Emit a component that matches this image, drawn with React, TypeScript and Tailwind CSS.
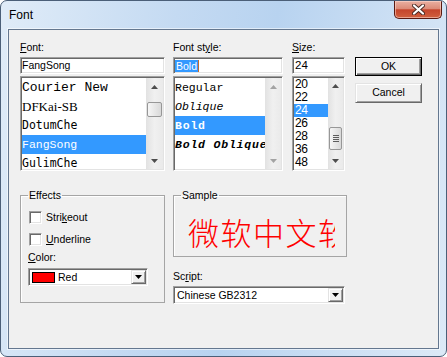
import React from 'react';

const ui = "font-['Liberation_Sans',Arial,sans-serif] text-[10.5px] text-black";
const sunken =
  'border border-t-[#a0a0a0] border-l-[#a0a0a0] border-b-white border-r-white shadow-[inset_1px_1px_0_#696969,inset_-1px_-1px_0_#e3e3e3]';
const raised =
  'border border-t-[#e3e3e3] border-l-[#e3e3e3] border-b-[#696969] border-r-[#696969] shadow-[inset_1px_1px_0_#fff,inset_-1px_-1px_0_#a0a0a0]';

const Arrow = ({ up, disabled }: { up?: boolean; disabled?: boolean }) => (
  <svg width="7" height="4" viewBox="0 0 7 4">
    <polygon points={up ? '0,4 3.5,0 7,4' : '0,0 7,0 3.5,4'} fill={disabled ? '#a3a3a3' : '#4d4d4d'} />
  </svg>
);

interface ScrollProps {
  w: string;
  btn: string;
  spacer?: string;
  thumb?: string;
  grip?: boolean;
  disabled?: boolean;
}

const ScrollBar: React.FC<ScrollProps> = ({ w, btn, spacer, thumb, grip, disabled }) => (
  <div className={`${w} h-full shrink-0 flex flex-col bg-gradient-to-r from-[#e2e2e2] via-[#f0f0f0] to-[#eaeaea]`}>
    <div className={`${btn} flex items-center justify-center shrink-0`}>
      <Arrow up disabled={disabled} />
    </div>
    <div className="flex-1 flex flex-col">
      {thumb && (
        <>
          <div className={spacer} />
          <div
            className={`${thumb} mx-px rounded-[2px] border border-[#979797] bg-gradient-to-r from-[#f6f6f6] to-[#d9d9d9] flex flex-col items-center justify-center gap-px`}
          >
            {grip &&
              [0, 1, 2, 3].map((i) => <div key={i} className="w-[6px] h-px bg-[#5d5d5d]" />)}
          </div>
        </>
      )}
    </div>
    <div className={`${btn} flex items-center justify-center shrink-0`}>
      <Arrow disabled={disabled} />
    </div>
  </div>
);

const fontItems = [
  { name: 'Courier New', cls: "font-['Liberation_Mono',monospace] text-[13px]" },
  { name: 'DFKai-SB', cls: "font-['Liberation_Serif',serif] text-[13px]" },
  { name: 'DotumChe', cls: "font-['DejaVu_Sans_Mono',monospace] text-[11.5px]" },
  { name: 'FangSong', cls: "font-['Liberation_Mono',monospace] text-[11.5px]", sel: true },
  { name: 'GulimChe', cls: "font-['DejaVu_Sans_Mono',monospace] text-[11.5px]" },
];

const styleItems = [
  { name: 'Regular', cls: '' },
  { name: 'Oblique', cls: 'italic' },
  { name: 'Bold', cls: 'font-bold tracking-[0.8px]', sel: true },
  { name: 'Bold Oblique', cls: 'font-bold italic tracking-[0.8px]' },
];

const sizes = ['20', '22', '24', '26', '28', '36', '48'];

const Combo = ({ w, children }: { w: string; children: React.ReactNode }) => (
  <div className={`${w} h-[18px] ${sunken} bg-white p-px flex items-center`}>
    <div className="flex-1 flex items-center overflow-hidden">{children}</div>
    <div className={`w-[15px] h-[14px] ${raised} bg-[#f0f0f0] flex items-center justify-center`}>
      <svg width="7" height="4" viewBox="0 0 7 4">
        <polygon points="0,0 7,0 3.5,4" fill="#000" />
      </svg>
    </div>
  </div>
);

const CheckRow = ({ children }: { children: React.ReactNode }) => (
  <div className="flex items-center h-[13px] pl-[1px]">
    <div className={`w-[13px] h-[13px] ${sunken} bg-white`} />
    <span className="ml-[4px] leading-[13px]">{children}</span>
  </div>
);

export default function App() {
  return (
    <div
      className={`${ui} w-[447px] h-[357px] flex flex-col rounded-[7px] border border-[#4b5f78] overflow-hidden bg-[linear-gradient(100deg,#e0ecf8_0%,#c4daf2_35%,#b8d3f0_55%,#cde0f4_80%,#dce9f7_100%)]`}
    >
      {/* title bar */}
      <div className="flex h-[28px] shrink-0">
        <div className="pl-[8px] pt-[7px] text-[12px] leading-[15px]">Font</div>
        <div className="ml-auto mr-[4px] w-[48px] h-[18px] rounded-b-[5px] border border-t-0 border-[#5a1a12] shadow-[inset_0_0_0_1px_rgba(255,220,210,0.55)] bg-[linear-gradient(180deg,#eab0a2_0%,#dc8b78_45%,#c5452c_52%,#d0603f_100%)] flex items-center justify-center">
          <svg width="13" height="11" viewBox="0 0 13 11">
            <path d="M2 1.5 L11 9.5 M11 1.5 L2 9.5" stroke="#4a2a24" strokeWidth="4" strokeLinecap="round" />
            <path d="M2 1.5 L11 9.5 M11 1.5 L2 9.5" stroke="#fff" strokeWidth="2.2" strokeLinecap="round" />
          </svg>
        </div>
      </div>

      {/* client area */}
      <div className="ml-[7px] w-[431px] h-[320px] shrink-0 border border-[#64778f] shadow-[0_0_0_1px_rgba(255,255,255,0.55)] bg-[#f0f0f0] pt-[11px] pl-[11px]">
        <div className="flex">
          {/* Font */}
          <div className="w-[145px]">
            <div className="h-[16px] leading-[13px]">
              <u>F</u>ont:
            </div>
            <div className={`h-[17px] ${sunken} bg-white p-px leading-[13px]`}>FangSong</div>
            <div className={`mt-[2px] h-[95px] ${sunken} bg-white p-px flex overflow-hidden`}>
              <div className="flex-1 overflow-hidden">
                {fontItems.map((f) => (
                  <div
                    key={f.name}
                    className={`${f.cls} h-[19px] leading-[19px] whitespace-nowrap ${f.sel ? 'bg-[#3399ff] text-white' : ''}`}
                  >
                    {f.name}
                  </div>
                ))}
              </div>
              <ScrollBar w="w-[17px]" btn="h-[17px]" spacer="h-[7px]" thumb="h-[15px]" />
            </div>
          </div>

          {/* Font style */}
          <div className="w-[110px] ml-[8px]">
            <div className="h-[16px] leading-[13px]">
              Font st<u>y</u>le:
            </div>
            <div className={`h-[17px] ${sunken} bg-white p-px flex items-center`}>
              <span className="px-px bg-[#3399ff] text-white leading-[12px]">Bold</span>
              <span className="w-px h-[12px] bg-[#c46a2e]" />
            </div>
            <div className={`mt-[2px] h-[95px] ${sunken} bg-white p-px flex overflow-hidden`}>
              <div className="flex-1 overflow-hidden">
                {styleItems.map((s) => (
                  <div
                    key={s.name}
                    className={`font-['Liberation_Mono',monospace] text-[11.5px] ${s.cls} h-[19px] leading-[19px] whitespace-nowrap ${s.sel ? 'bg-[#3399ff] text-white' : ''}`}
                  >
                    {s.name}
                  </div>
                ))}
              </div>
              <ScrollBar w="w-[16px]" btn="h-[17px]" disabled />
            </div>
          </div>

          {/* Size */}
          <div className="w-[53px] ml-[9px]">
            <div className="h-[16px] leading-[13px]">
              <u>S</u>ize:
            </div>
            <div className={`h-[17px] ${sunken} bg-white p-px pl-[2px] text-[11.5px] leading-[13px]`}>24</div>
            <div className={`mt-[2px] h-[95px] ${sunken} bg-white p-px flex overflow-hidden`}>
              <div className="flex-1 overflow-hidden">
                {sizes.map((s) => (
                  <div
                    key={s}
                    className={`h-[13px] leading-[13px] pl-px text-[12px] tracking-[-0.3px] ${s === '24' ? 'bg-[#3399ff] text-white' : ''}`}
                  >
                    {s}
                  </div>
                ))}
              </div>
              <ScrollBar w="w-[15px]" btn="h-[16px]" spacer="h-[33px]" thumb="h-[23px]" grip />
            </div>
          </div>

          {/* Buttons */}
          <div className="w-[67px] ml-[10px] pt-[16px] flex flex-col">
            <div className="h-[19px] border border-black bg-[#f0f0f0] shadow-[inset_1px_1px_0_#fff,inset_-1px_-1px_0_#696969,inset_-2px_-2px_0_#a0a0a0] flex items-center justify-center">
              OK
            </div>
            <div className={`mt-[7px] h-[20px] ${raised} bg-[#f0f0f0] flex items-center justify-center`}>
              Cancel
            </div>
          </div>
        </div>

        {/* lower row */}
        <div className="flex mt-[17px]">
          <fieldset className="w-[145px] h-[115px] border border-[#a5a5a5] shadow-[inset_1px_1px_0_#fff]">
            <legend className="ml-[7px] px-px leading-[14px]">Effects</legend>
            <div className="pl-[7px] pt-[9px] flex flex-col">
              <CheckRow>
                Stri<u>k</u>eout
              </CheckRow>
              <div className="mt-[9px]">
                <CheckRow>
                  <u>U</u>nderline
                </CheckRow>
              </div>
              <div className="mt-[5px] leading-[13px]">
                <u>C</u>olor:
              </div>
              <div className="mt-[4px]">
                <Combo w="w-[120px]">
                  <div className="ml-[2px] w-[23px] h-[11px] border border-black bg-[#ff0000]" />
                  <span className="ml-[3px] leading-[13px]">Red</span>
                </Combo>
              </div>
            </div>
          </fieldset>

          <div className="w-[174px] ml-[8px] flex flex-col">
            <fieldset className="h-[69px] border border-[#a5a5a5] shadow-[inset_1px_1px_0_#fff]">
              <legend className="ml-[7px] px-px leading-[14px]">Sample</legend>
              <div className="ml-[11px] mt-[12px] w-[150px] pl-[3px] overflow-hidden whitespace-nowrap font-['Noto_Sans_CJK_SC',sans-serif] font-light text-[31px] leading-[36px] tracking-[1.5px] text-[#ff0000]">
                微软中文软件
              </div>
            </fieldset>
            <div className="mt-[13px] leading-[13px]">
              Sc<u>r</u>ipt:
            </div>
            <div className="mt-[3px]">
              <Combo w="w-[172px]">
                <span className="ml-[2px] leading-[13px]">Chinese GB2312</span>
              </Combo>
            </div>
          </div>
        </div>
      </div>
    </div>
  );
}
